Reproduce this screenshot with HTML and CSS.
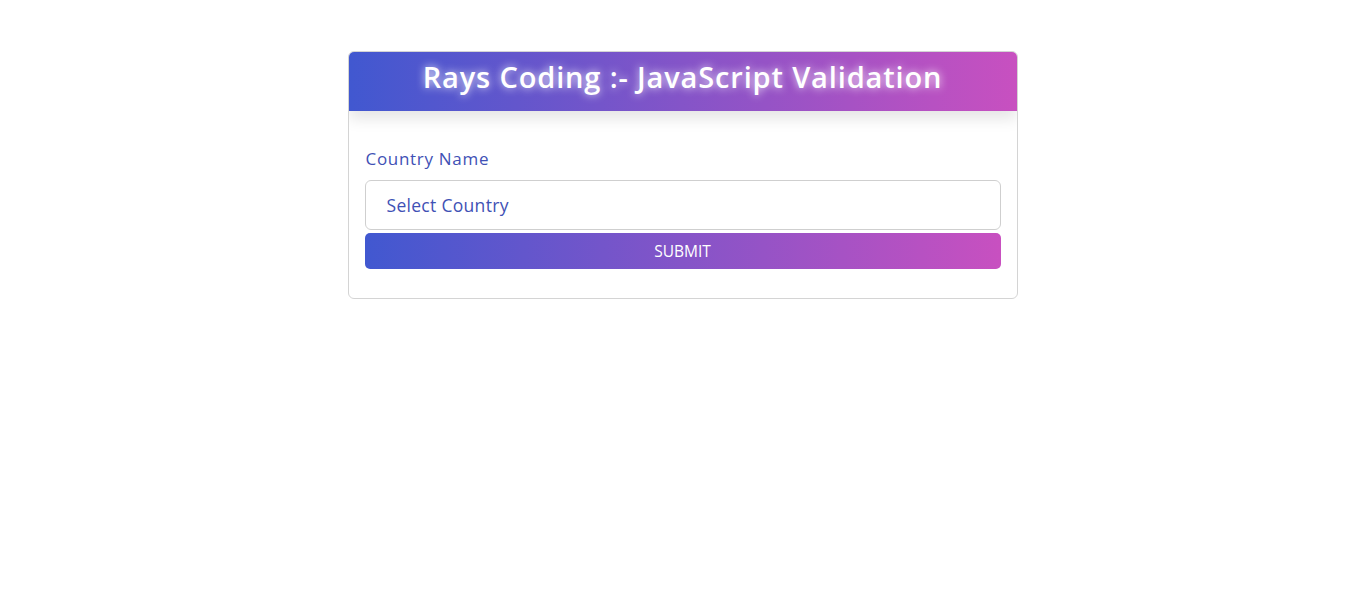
FILE: index.html
```html
<!DOCTYPE html>
<html lang="en">
<head>
    <meta charset="UTF-8">
    <meta name="viewport" content="width=device-width, initial-scale=1.0">
    <title>Rays Coding :- JavaScript Validation</title>
    <link rel="stylesheet" href="styles.css">
</head>
<body>
    <div class="container">
        <div class="card">
            <div class="card-header">
                <h1>Rays Coding :- JavaScript Validation</h1>
            </div>
            <form class="card-body" onsubmit="return false">
                <label for="country">Country Name</label>
                <input type="text" id="country" placeholder="Select Country">
                <button type="submit">SUBMIT</button>
            </form>
        </div>
    </div>
</body>
</html>
```

FILE: styles.css
```css
* {
    box-sizing: border-box;
}
body {
    margin: 0;
    font-family: "Open Sans", sans-serif;
    background: #fff;
}
.container {
    padding-top: 51px;
    display: flex;
    justify-content: center;
}
.card {
    width: 670px;
    margin-left: 7px;
    border: 1px solid #d4d4d4;
    border-radius: 6px;
    overflow: hidden;
}
.card-header {
    height: 59px;
    padding-bottom: 10px;
    display: flex;
    align-items: center;
    justify-content: center;
    background: linear-gradient(90deg, #4158d0, #c850c0);
    box-shadow: 0 8px 14px rgba(0, 0, 0, 0.1);
    position: relative;
}
.card-header h1 {
    margin: 0;
    color: #fff;
    font-size: 29px;
    font-weight: 600;
    letter-spacing: 0.85px;
    text-shadow: 0 0 8px rgba(255, 255, 255, 0.9);
}
.card-body {
    display: flex;
    flex-direction: column;
    padding: 36px 16px 29px;
}
label {
    color: #3f51b5;
    font-size: 17px;
    letter-spacing: 0.7px;
    margin-bottom: 10px;
    margin-left: 1px;
}
input {
    height: 50px;
    border: 1px solid #cfcfcf;
    border-radius: 6px;
    padding: 0 21px;
    font-family: inherit;
    font-size: 17.5px;
    letter-spacing: 0.3px;
    color: #3f51b5;
    margin-bottom: 3px;
}
input::placeholder {
    color: #3f51b5;
}
button {
    height: 36px;
    border: none;
    border-radius: 5px;
    background: linear-gradient(90deg, #4158d0, #c850c0);
    color: #fff;
    font-family: inherit;
    font-size: 15.5px;
    cursor: pointer;
}
```
